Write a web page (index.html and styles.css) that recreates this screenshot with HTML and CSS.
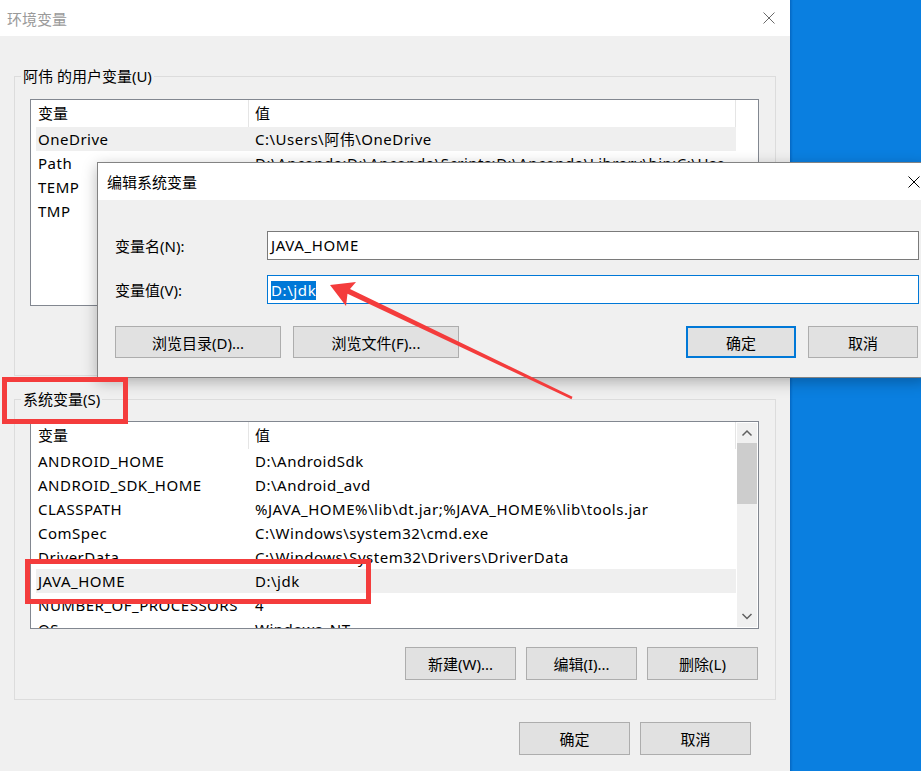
FILE: index.html
```html
<!DOCTYPE html>
<html lang="zh-CN">
<head>
  <meta charset="utf-8">
  <meta name="viewport" content="width=device-width, initial-scale=1.0">
  <link rel="stylesheet" href="styles.css">
</head>
<body>
  <div class="screen">
    <!-- main window: 环境变量 -->
    <div class="window">
      <div class="titlebar">
        <span class="title">环境变量</span>
        <svg class="close" width="12" height="12" viewBox="0 0 12 12"><path d="M0.5 0.5L11.5 11.5M11.5 0.5L0.5 11.5" stroke="#6a6a6a" stroke-width="1"/></svg>
      </div>

      <div class="content">
        <fieldset class="group user-group">
          <legend>阿伟 的用户变量(U)</legend>
          <div class="listbox user-list">
            <div class="list-main">
              <div class="list-head"><span>变量</span><span>值</span></div>
              <div class="row hover"><span>OneDrive</span><span>C:\Users\阿伟\OneDrive</span></div>
              <div class="row"><span>Path</span><span>D:\Anconda;D:\Anconda\Scripts;D:\Anconda\Library\bin;C:\Use</span></div>
              <div class="row"><span>TEMP</span><span>C:\Users\阿伟\AppData\Local\Temp</span></div>
              <div class="row"><span>TMP</span><span>C:\Users\阿伟\AppData\Local\Temp</span></div>
            </div>
          </div>
          <div class="btn-row">
            <button class="btn">新建(N)...</button>
            <button class="btn">编辑(E)...</button>
            <button class="btn">删除(D)</button>
          </div>
        </fieldset>

        <fieldset class="group sys-group">
          <legend>系统变量(S)</legend>
          <div class="listbox sys-list">
            <div class="list-main">
              <div class="list-head"><span>变量</span><span>值</span></div>
              <div class="row"><span>ANDROID_HOME</span><span>D:\AndroidSdk</span></div>
              <div class="row"><span>ANDROID_SDK_HOME</span><span>D:\Android_avd</span></div>
              <div class="row"><span>CLASSPATH</span><span>%JAVA_HOME%\lib\dt.jar;%JAVA_HOME%\lib\tools.jar</span></div>
              <div class="row"><span>ComSpec</span><span>C:\Windows\system32\cmd.exe</span></div>
              <div class="row"><span>DriverData</span><span>C:\Windows\System32\Drivers\DriverData</span></div>
              <div class="row hover"><span>JAVA_HOME</span><span>D:\jdk</span></div>
              <div class="row"><span>NUMBER_OF_PROCESSORS</span><span>4</span></div>
              <div class="row"><span>OS</span><span>Windows_NT</span></div>
            </div>
            <div class="scrollbar">
              <svg class="sb-arrow" width="20" height="20" viewBox="0 0 20 20"><path d="M5.5 12.5L10 8L14.5 12.5" fill="none" stroke="#606060" stroke-width="1.5"/></svg>
              <div class="sb-thumb"></div>
              <div class="sb-track"></div>
              <svg class="sb-arrow" width="20" height="20" viewBox="0 0 20 20"><path d="M5.5 7L10 11.5L14.5 7" fill="none" stroke="#606060" stroke-width="1.5"/></svg>
            </div>
          </div>
          <div class="btn-row sys-btns">
            <button class="btn">新建(W)...</button>
            <button class="btn">编辑(I)...</button>
            <button class="btn">删除(L)</button>
          </div>
        </fieldset>

        <div class="footer">
          <button class="btn">确定</button>
          <button class="btn">取消</button>
        </div>
      </div>
    </div>

    <div class="desktop"></div>
  </div>

  <!-- edit dialog on top of the main window -->
  <div class="dialog">
    <div class="dlg-title">
      <span>编辑系统变量</span>
      <svg class="close" width="12" height="12" viewBox="0 0 12 12"><path d="M0.5 0.5L11.5 11.5M11.5 0.5L0.5 11.5" stroke="#000" stroke-width="1"/></svg>
    </div>
    <div class="dlg-body">
      <div class="field-grid">
        <label>变量名(N):</label>
        <div class="textbox">JAVA_HOME</div>
        <label>变量值(V):</label>
        <div class="textbox focused"><span class="sel">D:\jdk</span></div>
      </div>
      <div class="dlg-buttons">
        <div class="btn-group">
          <button class="btn wide">浏览目录(D)...</button>
          <button class="btn wide">浏览文件(F)...</button>
        </div>
        <div class="btn-group">
          <button class="btn mid default">确定</button>
          <button class="btn mid">取消</button>
        </div>
      </div>
    </div>
  </div>

  <!-- red annotations -->
  <div class="mark mark-sys"></div>
  <div class="mark mark-java"></div>
  <svg class="arrow" width="921" height="771" viewBox="0 0 921 771">
    <polygon points="330,285 356,282 350,289 572.5,396.8 571.5,399.2 347.5,293.8 346,306" fill="#f43c3c"/>
  </svg>
</body>
</html>
```

FILE: styles.css
```css
/* whole screenshot: window on the left, desktop on the right */
* {
  box-sizing: border-box;
}

body {
  margin: 0;
  width: 921px;
  height: 771px;
  overflow: hidden;
  position: relative;
  font-family: "Noto Sans", "Noto Sans CJK SC", sans-serif;
  font-size: 15px;
  color: #000;
}

.screen {
  display: flex;
  height: 771px;
}

.window {
  width: 790px;
  flex: none;
  background-color: #f0f0f0;
}

.desktop {
  flex: 1;
  background: linear-gradient(90deg, #0567c2 0, #0a7fe0 3px, #0a7fe0 100%);
}

.titlebar {
  height: 36px;
  background-color: #fff;
  display: flex;
  align-items: center;
  justify-content: space-between;
  padding: 0 15px 0 7px;
}

.title {
  color: #9a9a9a;
}

.content {
  padding-top: 30px;
}

/* group boxes */
.group {
  margin: 0 14px;
  padding: 13px 16px 19px 15px;
  border: 1px solid #dcdcdc;
  min-width: 0;
}

.group legend {
  padding: 0 2px;
  margin-left: -9px;
  line-height: 20px;
}

.sys-group {
  margin-top: 13px;
  padding-top: 12px;
}

/* list views */
.listbox {
  display: flex;
  border: 1px solid #828790;
  background-color: #fff;
}

.user-list {
  height: 207px;
}

.sys-list {
  height: 208px;
}

.list-main {
  width: 705px;
  flex: none;
  overflow: hidden;
}

.list-head {
  display: grid;
  grid-template-columns: 218px 487px;
  height: 27px;
}

.list-head span {
  line-height: 27px;
  padding-left: 7px;
  border-right: 1px solid #e5e5e5;
}

.list-head span + span {
  padding-left: 6px;
}

.row {
  display: grid;
  grid-template-columns: 213px 1fr;
  height: 24px;
  line-height: 24px;
  margin-left: 5px;
  width: 700px;
  white-space: nowrap;
  letter-spacing: 0.5px;
}

.row span {
  padding-left: 2px;
  overflow: hidden;
}

.row span + span {
  padding-left: 6px;
  text-overflow: ellipsis;
}

.row.hover {
  background-color: #efefef;
}

.scrollbar {
  width: 20px;
  margin: 1px;
  background-color: #f0f0f0;
  display: flex;
  flex-direction: column;
}

.sb-arrow {
  display: block;
  flex: none;
}

.sb-thumb {
  height: 61px;
  background-color: #cdcdcd;
  flex: none;
}

.sb-track {
  flex: 1;
}

/* buttons */
.btn {
  height: 33px;
  width: 111px;
  padding: 0;
  background-color: #e1e1e1;
  border: 1px solid #adadad;
  font-family: inherit;
  font-size: 15px;
  color: #000;
}

.btn-row {
  display: flex;
  justify-content: flex-end;
  gap: 10px;
  margin-top: 17px;
  margin-right: 1px;
}

.sys-btns {
  margin-top: 18px;
}

.footer {
  display: flex;
  justify-content: flex-end;
  gap: 10px;
  margin-top: 22px;
  padding-right: 39px;
}

/* edit dialog */
.dialog {
  position: absolute;
  left: 97px;
  top: 162px;
  width: 830px;
  height: 216px;
  border: 1px solid #838383;
  background-color: #f0f0f0;
  box-shadow: 0 4px 14px rgba(0, 0, 0, 0.28);
}

.dlg-title {
  height: 37px;
  background-color: #fff;
  display: flex;
  align-items: center;
  justify-content: space-between;
  padding: 0 6px 0 9px;
}

.dlg-body {
  padding: 31px 0 0 17px;
}

.field-grid {
  display: grid;
  grid-template-columns: 152px 652px;
  row-gap: 15px;
  align-items: center;
}

.textbox {
  height: 29px;
  line-height: 27px;
  padding-left: 3px;
  border: 1px solid #7a7a7a;
  background-color: #fff;
  letter-spacing: 0.6px;
}

.textbox.focused {
  border-color: #0078d7;
}

.sel {
  display: inline-block;
  line-height: 19px;
  background-color: #0078d7;
  color: #fff;
  vertical-align: middle;
}

.dlg-buttons {
  display: flex;
  justify-content: space-between;
  width: 803px;
  margin-top: 22px;
}

.btn-group {
  display: flex;
  gap: 12px;
}

.btn.wide {
  width: 166px;
  height: 32px;
}

.btn.mid {
  width: 110px;
  height: 32px;
}

.btn.default {
  border: 2px solid #0078d7;
}

/* red annotations */
.mark {
  position: absolute;
  border: 5px solid #f43c3c;
}

.mark-sys {
  left: 2px;
  top: 377px;
  width: 126px;
  height: 47px;
}

.mark-java {
  left: 25px;
  top: 559px;
  width: 346px;
  height: 45px;
}

.arrow {
  position: absolute;
  left: 0;
  top: 0;
  pointer-events: none;
}
```
